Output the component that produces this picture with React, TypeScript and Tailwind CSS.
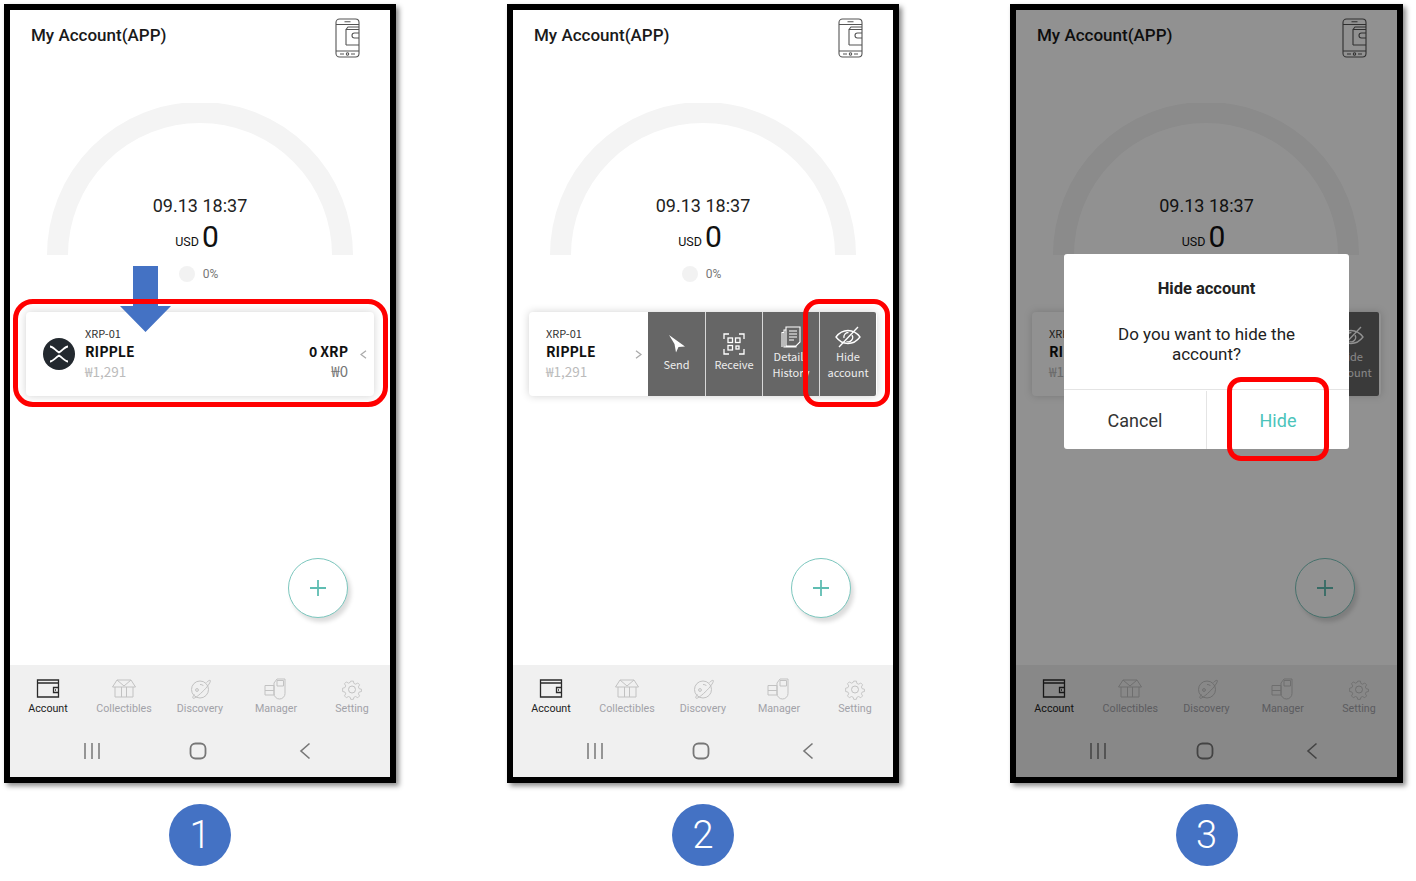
import React from 'react';

const tabs = ['Account', 'Collectibles', 'Discovery', 'Manager', 'Setting'];

function PhoneWalletIcon() {
  return (
    <svg width="26" height="40" viewBox="0 0 26 40" fill="none" stroke="#555" strokeWidth="1.1">
      <rect x="1" y="1" width="23" height="38" rx="3.5" />
      <path d="M1 6.5h23M1 33h23M9.5 3.8h6" />
      <circle cx="12.5" cy="36" r="1.2" />
      <path d="M5 36h4M16 36h4" />
      <path d="M11 27V11.5h13M11 11.5l2-2.5h11M24 15h-4.5a1.6 1.6 0 0 0 0 5H24M11 27h13" />
    </svg>
  );
}

function TabIcon({ name, color }: { name: string; color: string }) {
  const common = { width: 26, height: 22, viewBox: '0 0 26 22', fill: 'none', stroke: color, strokeWidth: 1 };
  if (name === 'Account')
    return (
      <svg {...common} strokeWidth={1.3}>
        <path d="M2.5 2h21v17h-21zM2.5 5h21" />
        <path d="M23.5 9.500h-5v5h5" />
        <path d="M20 12h1" />
      </svg>
    );
  if (name === 'Collectibles')
    return (
      <svg {...common}>
        <path d="M1.500 9L6 2h14l4.500 7zM6 2l7 6 7-6" />
        <path d="M4 9v10h18V9M10.500 9v10M15.500 9v10" />
      </svg>
    );
  if (name === 'Discovery')
    return (
      <svg {...common}>
        <circle cx="13" cy="11.500" r="8.500" />
        <path d="M19.500 4.500c1.800-1.800 3.300-2.500 3.800-2 .7.800-2 5.400-6.500 9.900S7.500 21 6 20.200c-.8-.5.200-2.200 1.500-3.700" />
        <circle cx="10" cy="12" r="1.400" />
        <path d="M13 6.500c1.500 0 3 .5 3.500 1.500" />
      </svg>
    );
  if (name === 'Manager')
    return (
      <svg {...common}>
        <path d="M2 7.500h9v9.500H2zM2 12.500h9" />
        <path d="M11 5V15.500a5.500 5.500 0 0 0 11 0V1H14L11 5z" />
        <path d="M14 2.500h6.500V8H14z" />
      </svg>
    );
  return (
    <svg {...common}>
      <circle cx="13" cy="11.500" r="3.500" />
      <path d="M11.500 1.500h3l.6 2.600 2 .9 2.400-1.400 2.100 2.100-1.400 2.400.9 2 2.600.6v2.600l-2.600.6-.9 2 1.400 2.400-2.100 2.100-2.400-1.400-2 .9-.6 2.300h-3l-.6-2.300-2-.9-2.400 1.400-2.100-2.100 1.400-2.400-.9-2-2.600-.6V9.500l2.600-.6.9-2-1.400-2.400 2.100-2.100 2.400 1.400 2-.9z" transform="translate(1.600 1.800) scale(.88)" />
    </svg>
  );
}

function BottomBar() {
  return (
    <div className="flex flex-col h-[112px] bg-[#f0f0f0]">
      <div className="flex h-[61px] pt-[13px]">
        {tabs.map((t, i) => (
          <div key={t} className="flex-1 flex flex-col items-center">
            <TabIcon name={t} color={i === 0 ? '#2a2a2a' : '#c2c2c2'} />
            <span className={`mt-[1px] text-[10.700px] leading-[16px] ${i === 0 ? 'text-[#222]' : 'text-[#a2a2a8]'}`}>{t}</span>
          </div>
        ))}
      </div>
      {/* android soft keys */}
      <div className="flex-1 flex items-center justify-between pl-[73px] pr-[79px] pb-[2px]">
        <svg width="18" height="18" viewBox="0 0 18 18" stroke="#7f7f7f" strokeWidth="1.600">
          <path d="M2 1v16M9 1v16M16 1v16" />
        </svg>
        <svg className="mr-[4px]" width="18" height="18" viewBox="0 0 18 18" fill="none" stroke="#777" strokeWidth="1.800">
          <rect x="1.500" y="1.500" width="15" height="15" rx="5" />
        </svg>
        <svg width="12" height="18" viewBox="0 0 12 18" fill="none" stroke="#777" strokeWidth="1.600">
          <path d="M10.500 1.500L2 9l8.500 7.500" />
        </svg>
      </div>
    </div>
  );
}

function Gauge() {
  return (
    <div className="relative h-[153px] mx-[37px] pb-[3px] flex flex-col items-center justify-end">
      <svg className="absolute left-0 top-0" width="306" height="153" viewBox="0 0 306 153" fill="none">
        <path d="M10.500 152A142.500 142.500 0 0 1 295.500 152" stroke="#f4f4f4" strokeWidth="21" />
      </svg>
      <div className="relative text-[18px] leading-[24px] text-[#222] mb-[3px]">09.13 18:37</div>
      <div className="relative flex items-end h-[32px] pr-[6px] text-[#111]">
        <span className="text-[12.500px] leading-[20px] mr-[3px] mb-[1px]">USD</span>
        <span className="text-[30px] leading-[32px]">0</span>
      </div>
    </div>
  );
}

function ActionButton({ label, labelClass, children }: { label: string[]; labelClass?: string; children: React.ReactNode }) {
  return (
    <div className="w-[57px] shrink-0 h-full bg-[#666] border-l border-[#d8d8d8] first:border-l-0 pb-[2px] flex flex-col items-center justify-center text-[#eee] text-[11px] leading-[16.500px] font-['Noto_Sans_CJK_KR',sans-serif] whitespace-nowrap overflow-hidden">
      {children}
      {label.map((l, i) => (
        <span key={l} className={i === 0 ? labelClass : undefined}>{l}</span>
      ))}
    </div>
  );
}

function SwipeActions() {
  return (
    <div className="flex h-full overflow-hidden rounded-r-[2px]">
      <ActionButton label={['Send']}>
        <svg className="mb-[2px]" width="18" height="20" viewBox="0 0 18 20" fill="#fff">
          <path d="M1 1l16 11.500-6.500.5L8 18.500 6.500 10z" />
        </svg>
      </ActionButton>
      <ActionButton label={['Receive']}>
        <svg className="mb-[1px]" width="22" height="22" viewBox="0 0 22 22" fill="none" stroke="#fff" strokeWidth="1.300">
          <path d="M1 6V1h5M16 1h5v5M1 16v5h5M21 16v5h-5" />
          <rect x="5" y="5" width="4.500" height="4.500" />
          <rect x="12.500" y="5" width="4.500" height="4.500" />
          <rect x="5" y="12.500" width="4.500" height="4.500" />
          <rect x="13" y="13" width="3" height="3" />
        </svg>
      </ActionButton>
      <ActionButton label={['Detail', 'History']} labelClass="pr-[5px]">
        <svg width="20" height="22" viewBox="0 0 20 22" fill="none" stroke="#fff" strokeWidth="1.100">
          <path d="M5 1h14v15l-4 4H5zM5 4H3v17h12v-1M3 6.500H1V21" />
          <path d="M8 5h8M8 8h8M8 11h8M8 14h5" />
        </svg>
      </ActionButton>
      <ActionButton label={['Hide', 'account']}>
        <svg width="26" height="22" viewBox="0 0 26 22" fill="none" stroke="#fff" strokeWidth="1.300">
          <path d="M1 11c3-4 7-6.500 12-6.500S22 7 25 11c-3 4-7 6.500-12 6.500S4 15 1 11z" />
          <path d="M17 9a4.500 4.500 0 0 1-5.500 6.500M9 12a4.500 4.500 0 0 1 4.500-5.500" />
          <path d="M4 21L23 1" />
        </svg>
      </ActionButton>
    </div>
  );
}

function AccountCard({ open }: { open: boolean }) {
  return (
    <div className="mt-[28px] mx-[16px] h-[84px] bg-white rounded-[4px] shadow-[0_0_8px_rgba(0,0,0,0.18)] flex items-center font-['Noto_Sans_CJK_KR',sans-serif]">
      {open ? (
        <div className="w-[119px] shrink-0 pl-[17px] pr-[6px] flex items-center justify-between">
          <AccountName />
          <svg width="7" height="9" viewBox="0 0 7 9" fill="none" stroke="#aaa" strokeWidth="1.300">
            <path d="M1 .8L6 4.500 1 8.200" />
          </svg>
        </div>
      ) : (
        <div className="flex-1 flex items-center pl-[17px] pr-[7px]">
          <svg className="mr-[10px] shrink-0" width="32" height="32" viewBox="0 0 32 32" fill="none">
            <circle cx="16" cy="16" r="16" fill="#23292f" />
            <path d="M7 8.500c3 0 5 3.500 9 6 4-2.500 6-6 9-6M7 23.500c3 0 5-3.500 9-6 4 2.500 6 6 9 6" stroke="#fff" strokeWidth="1.800" />
          </svg>
          <AccountName />
          <div className="ml-auto flex flex-col items-end mt-[12px]">
            <span className="text-[14px] leading-[20px] font-bold text-[#111]">0 XRP</span>
            <span className="text-[15px] leading-[18px] text-[#777] mt-[1px]">₩0</span>
          </div>
          <svg className="ml-[12px]" width="7" height="9" viewBox="0 0 7 9" fill="none" stroke="#aaa" strokeWidth="1.300">
            <path d="M6 .8L1 4.500 6 8.200" />
          </svg>
        </div>
      )}
      {open && (
        <div className="h-full">
          <SwipeActions />
        </div>
      )}
    </div>
  );
}

function AccountName() {
  return (
    <div className="flex flex-col mb-[2px]">
      <span className="text-[11px] leading-[14px] text-[#333]">XRP-01</span>
      <span className="text-[14px] leading-[20px] font-bold text-[#111] mt-[1px]">RIPPLE</span>
      <span className="text-[13.500px] leading-[18px] text-[#bbb] mt-[1px]">₩1,291</span>
    </div>
  );
}

function ConfirmDialog() {
  return (
    <div className="absolute left-[48px] top-[244px] w-[285px] h-[195px] bg-white rounded-[3px] flex flex-col text-center">
      <div className="h-[136px] border-b border-[#e4e4e4] pt-[23px]">
        <div className="text-[16.500px] leading-[24px] font-bold text-[#222]">Hide account</div>
        <div className="mt-[23px] text-[17px] leading-[20px] text-[#222] px-[40px]">Do you want to hide the account?</div>
      </div>
      <div className="flex-1 flex text-[18px] pt-[1px]">
        <div className="w-[143px] border-r border-[#e4e4e4] flex items-center justify-center text-[#333]">Cancel</div>
        <div className="flex-1 flex items-center justify-center text-[#4cc4bb]">Hide</div>
      </div>
    </div>
  );
}

function Phone({ step, width }: { step: number; width: string }) {
  return (
    <div className={`flex flex-col items-center ${width}`}>
      <div className="relative w-full h-[779px] border-[6px] border-black bg-white shadow-[3px_3px_5px_rgba(0,0,0,0.45)] flex flex-col">
        <div className="flex justify-between pl-[21px] pr-[29px] h-[93px] pt-[8px]">
          <span className="text-[17px] leading-[34px] font-medium text-[#1a1a1a]">My Account(APP)</span>
          <PhoneWalletIcon />
        </div>
        <Gauge />
        <div className="flex items-center justify-center h-[20px] mt-[8px] pr-[3px]">
          <span className="w-[16px] h-[16px] rounded-full bg-[#f2f2f2] mr-[8px]" />
          <span className="text-[12px] text-[#777]">0%</span>
        </div>
        <AccountCard open={step > 1} />
        <div className="flex justify-end pr-[42px] mt-[162px]">
          <div className="w-[60px] h-[60px] rounded-full bg-white border border-[#7cc7be] shadow-[3px_4px_4px_rgba(0,0,0,0.14)] flex items-center justify-center">
            <svg width="16" height="16" viewBox="0 0 16 16" stroke="#5fbdb2" strokeWidth="1.800">
              <path d="M8 0v16M0 8h16" />
            </svg>
          </div>
        </div>
        <div className="mt-auto">
          <BottomBar />
        </div>

        {step === 3 && <div className="absolute inset-0 bg-black/[0.43]" />}
        {step === 3 && <ConfirmDialog />}

        {step === 1 && (
          <svg className="absolute left-[110px] top-[256px]" width="51" height="66" viewBox="0 0 51 66" fill="#4472c4">
            <path d="M13 0h25v40h13L25.500 66 0 40h13z" />
          </svg>
        )}
        {step === 1 && <div className="absolute left-[3px] top-[289px] w-[375px] h-[108px] border-[5px] border-[#f00] rounded-[20px]" />}
        {step === 2 && <div className="absolute left-[290px] top-[289px] w-[87px] h-[108px] border-[5px] border-[#f00] rounded-[16px]" />}
        {step === 3 && <div className="absolute left-[211px] top-[367px] w-[102px] h-[84px] border-[5px] border-[#f00] rounded-[14px]" />}
      </div>
      <div className="mt-[21px] w-[62px] h-[62px] rounded-full bg-[#4472c4] text-white flex items-center justify-center text-[38px] font-light">
        {step}
      </div>
    </div>
  );
}

export default function App() {
  return (
    <div className="w-[1416px] h-[881px] overflow-hidden bg-white flex gap-[111px] pl-[4px] pt-[4px] font-['Roboto',sans-serif]">
      <Phone step={1} width="w-[392px]" />
      <Phone step={2} width="w-[392px]" />
      <Phone step={3} width="w-[393px]" />
    </div>
  );
}
